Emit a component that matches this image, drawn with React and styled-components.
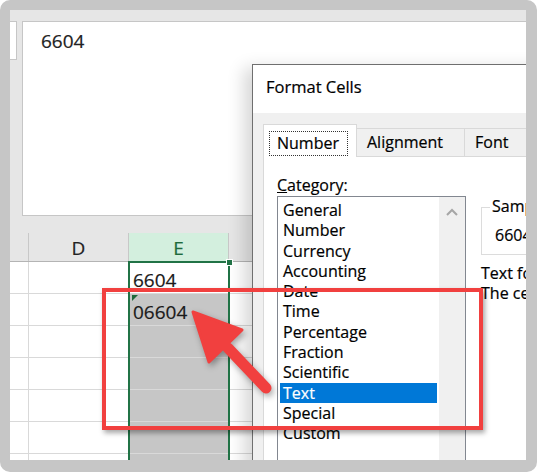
import React from "react";
import styled, { createGlobalStyle } from "styled-components";

const GlobalStyle = createGlobalStyle`
  html, body {
    margin: 0;
    padding: 0;
    background: #ffffff;
  }
  body {
    font-family: "Open Sans", "Noto Sans", sans-serif;
    color: #111;
  }
  * {
    box-sizing: border-box;
  }
`;

const categories = [
  "General",
  "Number",
  "Currency",
  "Accounting",
  "Date",
  "Time",
  "Percentage",
  "Fraction",
  "Scientific",
  "Text",
  "Special",
  "Custom",
];

const rows = ["6604", "06604", "", "", "", "", ""];

const App = () => {
  return (
    <>
      <GlobalStyle />
      <Frame>
        <Inner>
          <TopBar>
            <NameBox />
            <FormulaBox>6604</FormulaBox>
          </TopBar>

          <HeaderRow>
            <HeadCell />
            <HeadCell>D</HeadCell>
            <HeadCell $selected>E</HeadCell>
            <HeadCell />
          </HeaderRow>

          {rows.map((value, i) => (
            <Row key={i}>
              <Cell />
              <Cell />
              <Cell $selected={i > 0} $flag={i === 1}>
                {value}
              </Cell>
              <Cell />
            </Row>
          ))}

          <Selection>
            <FillHandle />
          </Selection>

          <Dialog>
            <TitleBar>Format Cells</TitleBar>
            <DialogBody>
              <Tabs>
                <Tab $active>
                  <FocusRing>Number</FocusRing>
                </Tab>
                <Tab>Alignment</Tab>
                <Tab $wide>Font</Tab>
              </Tabs>
              <Panel>
                <div>
                  <Label>
                    <u>C</u>ategory:
                  </Label>
                  <ListBox>
                    <Items>
                      {categories.map((c) => (
                        <Item key={c} $selected={c === "Text"}>
                          {c}
                        </Item>
                      ))}
                    </Items>
                    <ScrollBar>
                      <svg width="14" height="10" viewBox="0 0 14 10">
                        <path
                          d="M2 8 L7 3 L12 8"
                          fill="none"
                          stroke="#a6a6a6"
                          strokeWidth="2"
                        />
                      </svg>
                    </ScrollBar>
                  </ListBox>
                </div>
                <Side>
                  <Group>
                    <GroupLabel>Sample</GroupLabel>
                    6604
                  </Group>
                  <Desc>
                    Text format cells are treated as text even when a number is in the cell.
                    <br />
                    The cell is displayed exactly as entered.
                  </Desc>
                </Side>
              </Panel>
            </DialogBody>
          </Dialog>

          <Callout />
          <Arrow viewBox="10 10 516 450" width="516" height="450">
            <line
              x1="228"
              y1="348"
              x2="266"
              y2="388"
              stroke="#f1403f"
              strokeWidth="11"
              strokeLinecap="round"
            />
            <polygon
              points="193,312 242,330 209,362"
              fill="#f1403f"
              stroke="#f1403f"
              strokeWidth="3"
              strokeLinejoin="round"
            />
          </Arrow>
        </Inner>
      </Frame>
    </>
  );
};

export default App;

const Frame = styled.div`
  width: 537px;
  height: 472px;
  border-style: solid;
  border-color: #c6c6c6;
  border-width: 10px 11px 12px 10px;
  border-radius: 10px;
  overflow: hidden;
`;

const Inner = styled.div`
  position: relative;
  width: 100%;
  height: 100%;
  overflow: hidden;
  background: #ffffff;
  display: flex;
  flex-direction: column;
  font-family: "Open Sans", sans-serif;
  -webkit-text-stroke: 0.2px currentColor;
`;

const TopBar = styled.div`
  display: flex;
  align-items: flex-start;
  background: #e6e6e6;
  padding: 11px 0 17px 0;
  flex: none;
`;

const NameBox = styled.div`
  width: 7px;
  height: 39px;
  background: #ffffff;
  border: 1px solid #c6c6c6;
  border-left: none;
`;

const FormulaBox = styled.div`
  flex: 1;
  height: 195px;
  margin-left: 5px;
  background: #ffffff;
  border: 1px solid #c6c6c6;
  border-right: none;
  padding: 6px 0 0 18px;
  font-size: 19px;
  color: #222;
`;

const columns = "19px 100px 100px 1fr";

const HeaderRow = styled.div`
  display: grid;
  grid-template-columns: ${columns};
  height: 29px;
  flex: none;
  background: #e6e6e6;
  border-bottom: 1px solid #b4b4b4;
`;

const HeadCell = styled.div`
  display: flex;
  align-items: center;
  justify-content: center;
  border-right: 1px solid #c8c8c8;
  font-size: 19px;
  padding-top: 1px;
  background: ${(p) => (p.$selected ? "#d3efde" : "transparent")};
  color: ${(p) => (p.$selected ? "#1e6a3c" : "#222")};
`;

const Row = styled.div`
  display: grid;
  grid-template-columns: ${columns};
  height: 32px;
  flex: none;
  border-bottom: 1px solid #d9d9d9;
`;

const Cell = styled.div`
  position: relative;
  display: flex;
  align-items: flex-end;
  padding: 0 0 0 4px;
  border-right: 1px solid #d9d9d9;
  font-size: 19px;
  line-height: 26px;
  color: #1a1a1a;
  background: ${(p) => (p.$selected ? "#c6c6c6" : "transparent")};

  &::before {
    content: "";
    display: ${(p) => (p.$flag ? "block" : "none")};
    position: absolute;
    left: 3px;
    top: 1px;
    border-top: 6px solid #1e6a3c;
    border-right: 6px solid transparent;
  }
`;

const Selection = styled.div`
  position: absolute;
  left: 118px;
  top: 251px;
  width: 102px;
  height: 220px;
  border: 2px solid #217346;
  border-bottom: none;
`;

const FillHandle = styled.div`
  position: absolute;
  right: -5px;
  top: -4px;
  width: 7px;
  height: 7px;
  background: #217346;
  border: 1px solid #ffffff;
`;

const Dialog = styled.div`
  position: absolute;
  left: 242px;
  top: 54px;
  width: 420px;
  height: 460px;
  border: 1px solid #6f6f6f;
  background: #f0f0f0;
  box-shadow: -8px 4px 16px rgba(0, 0, 0, 0.16);
  display: flex;
  flex-direction: column;
  font-size: 16px;
  color: #000;
`;

const TitleBar = styled.div`
  height: 48px;
  flex: none;
  background: #ffffff;
  padding: 10px 0 0 13px;
  font-size: 16.5px;
`;

const DialogBody = styled.div`
  flex: 1;
  display: flex;
  flex-direction: column;
  padding: 11px 0 0 10px;
`;

const Tabs = styled.div`
  display: flex;
  align-items: flex-end;
  height: 33px;
  flex: none;
  position: relative;
  z-index: 1;
  margin-bottom: -1px;
`;

const Tab = styled.div`
  width: ${(p) => (p.$active ? "94px" : p.$wide ? "120px" : "108px")};
  height: ${(p) => (p.$active ? "33px" : "29px")};
  background: ${(p) => (p.$active ? "#ffffff" : "#f0f0f0")};
  border: 1px solid #d9d9d9;
  border-bottom: ${(p) => (p.$active ? "none" : "1px solid #d9d9d9")};
  border-left: ${(p) => (p.$active ? "1px solid #d9d9d9" : "none")};
  padding: ${(p) => (p.$active ? "6px 0 0 5px" : "2px 0 0 10px")};
  font-size: 16px;
`;

const FocusRing = styled.span`
  display: inline-block;
  padding: 0 8px 1px 7px;
  border: 1px dotted #333;
`;

const Panel = styled.div`
  flex: 1;
  background: #ffffff;
  border: 1px solid #d9d9d9;
  border-right: none;
  padding: 18px 0 0 13px;
  display: grid;
  grid-template-columns: 189px 1fr;
  column-gap: 15px;
`;

const Label = styled.div`
  height: 21px;
  line-height: 21px;
  font-size: 16px;
`;

const ListBox = styled.div`
  display: flex;
  width: 189px;
  height: 300px;
  border: 1px solid #828790;
`;

const Items = styled.div`
  flex: 1;
  padding: 3px 2px 0 2px;
`;

const Item = styled.div`
  height: 20.3px;
  line-height: 20.3px;
  padding-left: 3px;
  font-size: 16px;
  background: ${(p) => (p.$selected ? "#0078d7" : "transparent")};
  color: ${(p) => (p.$selected ? "#ffffff" : "#000")};
`;

const ScrollBar = styled.div`
  width: 26px;
  background: #f0f0f0;
  display: flex;
  justify-content: center;
  padding-top: 10px;
`;

const Side = styled.div`
  display: flex;
  flex-direction: column;
`;

const Group = styled.div`
  position: relative;
  margin-top: 32px;
  height: 48px;
  border: 1px solid #dcdcdc;
  border-right: none;
  padding: 17px 0 0 13px;
  line-height: 20px;
  white-space: nowrap;
`;

const GroupLabel = styled.span`
  position: absolute;
  left: 8px;
  top: -12px;
  padding: 0 2px;
  background: #ffffff;
  line-height: 20px;
`;

const Desc = styled.div`
  margin-top: 8px;
  line-height: 20px;
  white-space: nowrap;
`;

const Callout = styled.div`
  position: absolute;
  left: 92px;
  top: 278px;
  width: 381px;
  height: 142px;
  border: 4px solid #f1403f;
  box-shadow: 2px 3px 5px rgba(0, 0, 0, 0.35);
`;

const Arrow = styled.svg`
  position: absolute;
  left: 0;
  top: 0;
  filter: drop-shadow(2px 3px 3px rgba(0, 0, 0, 0.35));
  pointer-events: none;
`;
